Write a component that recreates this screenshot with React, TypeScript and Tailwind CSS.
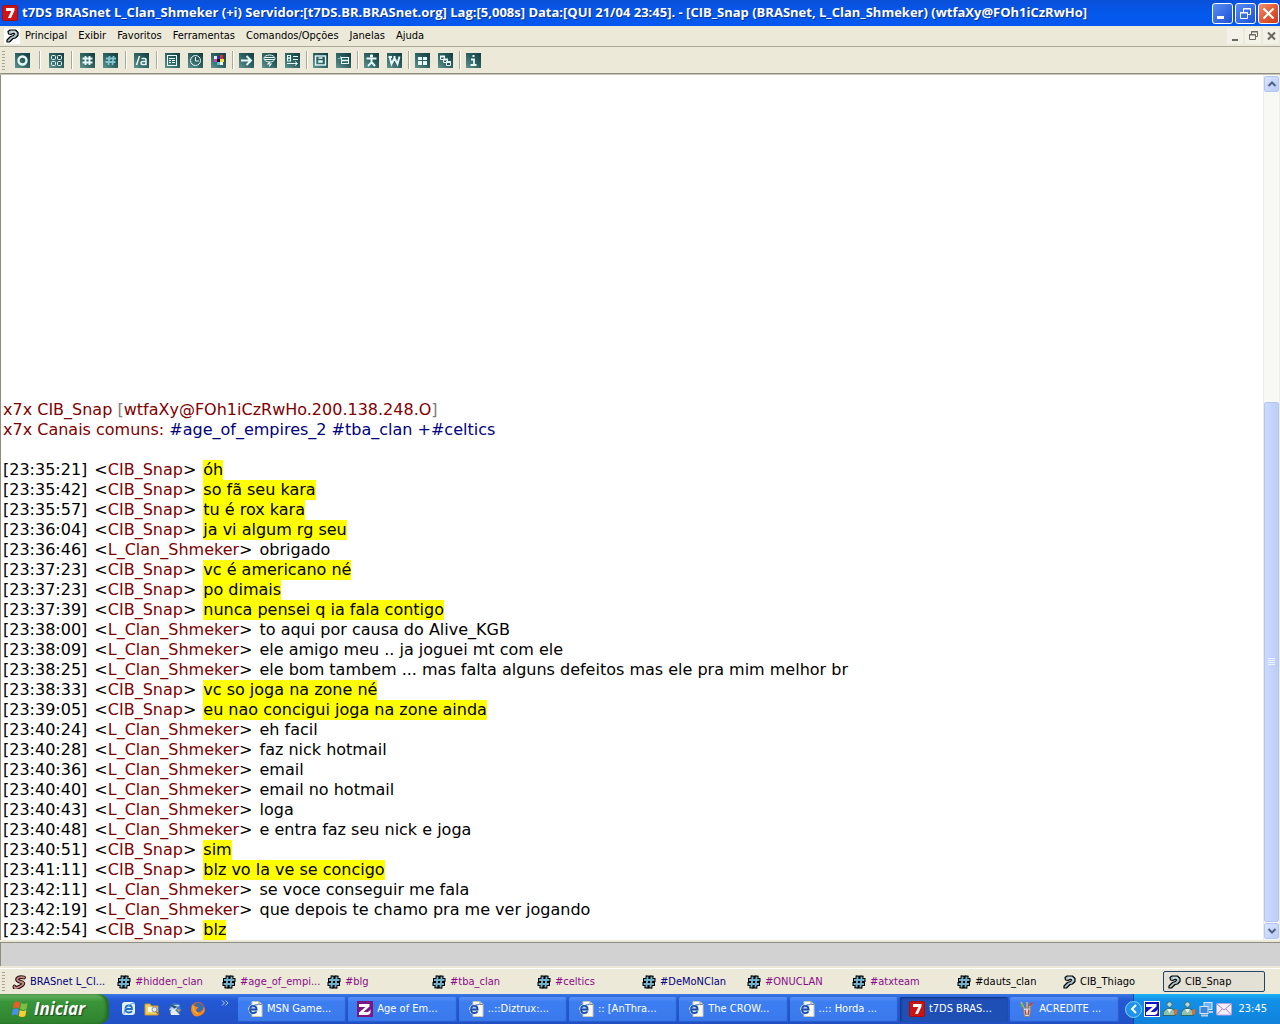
import React from "react";

const UI = "font-['DejaVu_Sans_Condensed','DejaVu_Sans',sans-serif]";

/* ---------- toolbar ---------- */

const toolGroups: { gap: string; tools: { name: string; art: React.ReactNode }[] }[] = [
  {
    gap: "w-[19px]",
    tools: [{ name: "Conectar", art: <circle cx="7.5" cy="7.5" r="4" strokeWidth="2.4" /> }],
  },
  {
    gap: "w-4",
    tools: [
      {
        name: "Opções",
        art: (
          <>
            <rect x="2.5" y="2.5" width="4" height="4" rx="1" />
            <rect x="8.5" y="2.5" width="4" height="4" rx="1" />
            <rect x="2.5" y="8.5" width="4" height="4" rx="1" />
            <rect x="8.5" y="8.5" width="4" height="4" rx="1" />
          </>
        ),
      },
    ],
  },
  {
    gap: "w-4",
    tools: [
      { name: "Canais", art: <path d="M5.5 3v9M9.5 3v9M2.5 5.5h10M2.5 9.5h10" strokeWidth="1.8" /> },
      {
        name: "Listar canais",
        art: <path d="M6.5 3l-1 9M10.5 3l-1 9M3 5.5h10M2.5 9h10" strokeWidth="1.8" stroke="#7fc4cf" />,
      },
    ],
  },
  {
    gap: "w-4",
    tools: [
      { name: "Apelidos", art: <path d="M5.500 3L2.500 12M7.500 5.500h3.500q1 0 1 1v5h-3.500q-1.500 0-1.500-1.500t1.500-1.500H12" strokeWidth="1.500" /> },
    ],
  },
  {
    gap: "w-[13px]",
    tools: [
      {
        name: "Agenda",
        art: (
          <>
            <rect x="2.5" y="2.5" width="9" height="10" />
            <path d="M4 5.500h6M4 7.500h2M7 7.500h3M4 9.500h2M7 9.500h3" />
          </>
        ),
      },
      {
        name: "Relógio",
        art: (
          <>
            <circle cx="7.5" cy="7.5" r="5" />
            <path d="M7.500 4v4h3.500" />
          </>
        ),
      },
      {
        name: "Cores",
        art: (
          <g stroke="none">
            <path fill="#e8f4f4" d="M3 3h3v3H3z" />
            <path fill="#2434c8" d="M6 3h3v3H6z" />
            <path fill="#d83030" d="M9 2h3v4H9z" />
            <path fill="#d040c0" d="M3 6h3v3H3z" />
            <path fill="#101010" d="M6 6h3v3H6z" />
            <path fill="#f0e040" d="M9 6h4v3H9z" />
            <path fill="#50c8e0" d="M6 9h3v3H6z" />
            <path fill="#f8f8f0" d="M9 9h3v3H9z" />
          </g>
        ),
      },
    ],
  },
  {
    gap: "w-[13px]",
    tools: [
      { name: "Enviar", art: <path d="M2 7.500h10M7.500 3l4.500 4.500L7.500 12" strokeWidth="2" /> },
      {
        name: "Conversa",
        art: (
          <>
            <ellipse cx="7.5" cy="5.5" rx="5.5" ry="3.5" />
            <path d="M3 4.500h9M2.500 6.500h10M8 9l-2 2h3l-2 2.500" strokeWidth="1.200" />
          </>
        ),
      },
      {
        name: "DCC",
        art: (
          <>
            <rect x="2.5" y="2.5" width="3" height="2.5" />
            <rect x="2.5" y="5" width="3" height="3" />
            <path d="M8 3.500h5M8 6.500h5M2 10.500h10M10 8.500l2.500 2-2.500 2" />
          </>
        ),
      },
    ],
  },
  {
    gap: "w-[13px]",
    tools: [
      {
        name: "Arquivos",
        art: (
          <>
            <rect x="2.5" y="3" width="10" height="9" strokeWidth="1.4" />
            <path d="M5.500 5h4M6 8h3v1H6z" strokeWidth="1.400" />
          </>
        ),
      },
      {
        name: "Janelas",
        art: (
          <>
            <path d="M4.500 3v2.500M2 5.500h3" stroke="#7fb5b5" />
            <rect x="5.5" y="4.5" width="7" height="6" />
            <path d="M6 7.500h6" strokeWidth="1.500" />
          </>
        ),
      },
    ],
  },
  {
    gap: "w-[13px]",
    tools: [
      {
        name: "Contatos",
        art: (
          <>
            <circle cx="7.5" cy="3" r="1.7" fill="#fff" stroke="none" />
            <path d="M2.500 5.500h10M7.500 5.500v4L4 13M7.500 9l3.500 4" strokeWidth="1.900" />
          </>
        ),
      },
      { name: "Whois", art: <path d="M2.500 3.500l2 7.500 3-6 3 6 2-7.500M1.500 4H5M6.500 4h2" strokeWidth="1.900" /> },
    ],
  },
  {
    gap: "w-[13px]",
    tools: [
      {
        name: "Lado a lado",
        art: (
          <g fill="#e8fafa" stroke="none">
            <path d="M3 4h4v3H3zM8 4h4v3H8zM3 8h4v4H3zM8 8h4v4H8z" />
          </g>
        ),
      },
      {
        name: "Cascata",
        art: (
          <g fill="#285a5a">
            <path d="M2.500 3.500h4v3h-4zM5.500 6.500h4v3h-4zM8.500 8.500h4v4h-4z" />
            <path d="M2 3.500h5M5 6.500h5M8 9h5" strokeWidth="2" />
          </g>
        ),
      },
    ],
  },
  {
    gap: "",
    tools: [{ name: "Sobre", art: <path d="M6.500 3h2M5 6.500h3V12M4.500 12h6" strokeWidth="1.800" /> }],
  },
];

function Grip() {
  return (
    <span className="flex w-1 flex-col gap-[2px]" aria-hidden="true">
      {Array.from({ length: 7 }, (_, i) => (
        <i key={i} className="block h-px w-[3px] bg-[#a8a592]" />
      ))}
    </span>
  );
}

function Toolbar() {
  return (
    <div role="toolbar" className="flex h-[27px] shrink-0 items-center border-b border-[#8f8c80] bg-[#ece9d8] pl-[2px]">
      <Grip />
      <div className="ml-[9px] flex items-center">
        {toolGroups.map((g, i) => (
          <React.Fragment key={i}>
            <div className="flex gap-2">
              {g.tools.map((t) => (
                <button
                  key={t.name}
                  aria-label={t.name}
                  title={t.name}
                  className="size-[15px] bg-linear-to-bl from-[#123c40] via-[#2e6263] to-[#609590]"
                >
                  <svg viewBox="0 0 15 15" className="block size-[15px]" fill="none" stroke="#e6f8f8">
                    {t.art}
                  </svg>
                </button>
              ))}
            </div>
            {g.gap && (
              <span className={"flex justify-center " + g.gap}>
                <i className="h-[18px] w-[2px] border-l border-[#aca899] bg-white" />
              </span>
            )}
          </React.Fragment>
        ))}
      </div>
    </div>
  );
}

/* ---------- small pictures ---------- */

function Seven() {
  return (
    <svg viewBox="0 0 16 16" className="size-4 shrink-0" aria-hidden="true">
      <rect x="0.5" y="0.5" width="15" height="15" rx="1.5" fill="#cc1414" stroke="#a80c0c" />
      <path d="M4 3h8.500v2.500L9 13H6l3.300-7H4z" fill="#fff" />
    </svg>
  );
}

function QueryIcon() {
  return (
    <svg viewBox="0 0 14 14" className="size-[14px] shrink-0" fill="none" strokeLinejoin="round" aria-hidden="true">
      <path d="M3 2.500L5 1h5.500L13 3.500v3L10.500 9 8 9.500 4.500 13H2v-2l3.500-3.500L8.500 6.500 9.500 5 8.500 4 6 5.500 3.500 5z" fill="#a9c3cc" stroke="#000" strokeWidth="1.200" />
      <path d="M6 3h4l1 1.500" stroke="#e4eff2" />
    </svg>
  );
}

function HashIcon() {
  return (
    <svg viewBox="0 0 14 14" className="size-[14px] shrink-0" fill="none" strokeLinecap="square" aria-hidden="true">
      <path d="M5.500 2.500l-1 9M9.500 2.500l-1 9M3 5h8.500M2.500 9H11" stroke="#000" strokeWidth="4" />
      <path d="M5.500 2.500l-1 9M9.500 2.500l-1 9M3 5h8.500M2.500 9H11" stroke="#6fb3cf" strokeWidth="1.900" />
    </svg>
  );
}

function StatusIcon() {
  return (
    <svg viewBox="0 0 14 14" className="size-[14px] shrink-0" fill="none" strokeLinecap="round" aria-hidden="true">
      <path d="M12 2.500Q7 1.500 5.500 3.500T9 7t-1 4.500-5.500 0" stroke="#1a0808" strokeWidth="3.800" />
      <path d="M12 2.500Q7 1.500 5.500 3.500T9 7t-1 4.500-5.500 0" stroke="#c98a88" strokeWidth="1.900" />
    </svg>
  );
}

function IePage() {
  return (
    <svg viewBox="0 0 16 16" className="size-4 shrink-0" fill="none" aria-hidden="true">
      <path d="M5 .5h7l3 3v12H5z" fill="#fbfbf2" stroke="#c9c7b5" />
      <path d="M12 .5v3h3" stroke="#888" />
      <circle cx="6" cy="8.5" r="5" fill="#cfe2f8" />
      <path d="M3 8.500h6.500Q9.500 5 6.200 5T3 8.500t3.400 3.600Q8.500 12 9.500 10.500" stroke="#1b4aa8" strokeWidth="1.800" />
      <path d="M1 12.500Q0 10 4 6.500t7.500-3" stroke="#3b74cc" />
    </svg>
  );
}

function ZoneIcon() {
  return (
    <svg viewBox="0 0 16 16" className="size-4 shrink-0" aria-hidden="true">
      <rect width="16" height="16" fill="#7c1680" />
      <path d="M2 3h10.500v2.500L6.500 11h4q2.500-.5 3-3v4q-1 2-3 2H2v-2.500L8.500 6H2z" fill="#fff" />
    </svg>
  );
}

function PaintIcon() {
  return (
    <svg viewBox="0 0 16 16" className="size-4 shrink-0" fill="none" aria-hidden="true">
      <path d="M5 7L2 1M8 7V1M10 7l3.500-5" stroke="#e8b04c" strokeWidth="1.600" />
      <path d="M2 3l1.500 3" stroke="#58b24e" strokeWidth="2" />
      <path d="M11 5l2.500-3.500" stroke="#d83c22" strokeWidth="2" />
      <path d="M4 7h8l-1.500 8.500h-5z" fill="#d8dde8" stroke="#8b7c74" />
      <path d="M6 9l1 5M10 8.500L9 14" stroke="#b84a30" strokeWidth="1.400" />
    </svg>
  );
}

function WindowsFlag() {
  return (
    <svg viewBox="0 0 18 18" className="size-[18px] shrink-0" aria-hidden="true">
      <path d="M3 2.500q3-2 6 0L8 8.500q-3-2-6 0z" fill="#ef5a2c" />
      <path d="M10 3q3 2 6.500 0l-1 6q-3 2-6.500 0z" fill="#7cc043" />
      <path d="M1.800 9.500q3-2 6 0l-1 6q-3-2-6 0z" fill="#4a8ff0" />
      <path d="M8.800 10q3 2 6.500 0l-1 6q-3 2-6.500 0z" fill="#fbcf33" />
    </svg>
  );
}

/* ---------- title and menu ---------- */

function TitleBar() {
  const btn = "flex size-[21px] items-center justify-center rounded-[3px] border border-white";
  return (
    <header className="flex h-[26px] shrink-0 items-center bg-linear-to-b from-[#0a4fd8] via-[#0458ec] to-[#0458ee] pr-px pl-[2px] text-white">
      <Seven />
      <h1 className="ml-1 min-w-0 flex-1 truncate font-['Open_Sans',sans-serif] text-[13px] font-bold whitespace-nowrap [text-shadow:1px_1px_#0a2f8c]">
        t7DS BRASnet L_Clan_Shmeker (+i) Servidor:[t7DS.BR.BRASnet.org] Lag:[5,008s] Data:[QUI 21/04 23:45]. - [CIB_Snap
        (BRASnet, L_Clan_Shmeker) (wtfaXy@FOh1iCzRwHo]
      </h1>
      <div className="flex gap-[2px]">
        <button aria-label="Minimizar" className={btn + " bg-linear-to-br from-[#5b8df5] to-[#1b4fd6]"}>
          <svg viewBox="0 0 19 19" className="size-[19px]"><path d="M4 12h7v3H4z" fill="#fff" /></svg>
        </button>
        <button aria-label="Restaurar" className={btn + " bg-linear-to-br from-[#5b8df5] to-[#1b4fd6]"}>
          <svg viewBox="0 0 19 19" className="size-[19px]" fill="none" stroke="#fff">
            <path d="M7.500 8V4.500h7v6H12M7 5h8M4.500 8.500h7v6h-7zM4 9h8" />
          </svg>
        </button>
        <button aria-label="Fechar" className={btn + " bg-linear-to-br from-[#ee8f6c] via-[#e25a34] to-[#cc3d16]"}>
          <svg viewBox="0 0 19 19" className="size-[19px]" stroke="#fff" strokeWidth="2.2"><path d="M4.500 4.500l10 10M14.500 4.500l-10 10" /></svg>
        </button>
      </div>
    </header>
  );
}

const menus = ["Principal", "Exibir", "Favoritos", "Ferramentas", "Comandos/Opções", "Janelas", "Ajuda"];

function MenuBar() {
  const btn = "flex size-4 items-center justify-center bg-[#f3f1e8]";
  return (
    <nav className="flex h-[21px] shrink-0 items-center border-b border-[#aca899] bg-[#ece9d8] pr-px pl-1">
      <span className="flex size-4 items-center justify-center bg-white"><QueryIcon /></span>
      <div className="ml-[5px] flex flex-1 gap-[11px] text-[11px] leading-4 text-black">
        {menus.map((m) => (
          <button key={m}>{m}</button>
        ))}
      </div>
      <div className="flex gap-[2px]">
        <button aria-label="Minimizar janela" className={btn}>
          <svg viewBox="0 0 16 16" className="size-4"><path d="M5 11h6v2H5z" fill="#6b695f" /></svg>
        </button>
        <button aria-label="Restaurar janela" className={btn}>
          <svg viewBox="0 0 16 16" className="size-4" fill="none" stroke="#6b695f"><path d="M6.500 6V3.500h6v5H11M6 4h7M4.500 6.500h6v5h-6zM4 7h7" /></svg>
        </button>
        <button aria-label="Fechar janela" className={btn}>
          <svg viewBox="0 0 16 16" className="size-4" stroke="#6b695f" strokeWidth="2"><path d="M5 4.500l7 7M12 4.500l-7 7" /></svg>
        </button>
      </div>
    </nav>
  );
}

/* ---------- conversation ---------- */

const C = "CIB_Snap";
const L = "L_Clan_Shmeker";
const messages: [string, string, string][] = [
  ["23:35:21", C, "óh"],
  ["23:35:42", C, "so fã seu kara"],
  ["23:35:57", C, "tu é rox kara"],
  ["23:36:04", C, "ja vi algum rg seu"],
  ["23:36:46", L, "obrigado"],
  ["23:37:23", C, "vc é americano né"],
  ["23:37:23", C, "po dimais"],
  ["23:37:39", C, "nunca pensei q ia fala contigo"],
  ["23:38:00", L, "to aqui por causa do Alive_KGB"],
  ["23:38:09", L, "ele amigo meu .. ja joguei mt com ele"],
  ["23:38:25", L, "ele bom tambem ... mas falta alguns defeitos mas ele pra mim melhor br"],
  ["23:38:33", C, "vc so joga na zone né"],
  ["23:39:05", C, "eu nao concigui joga na zone ainda"],
  ["23:40:24", L, "eh facil"],
  ["23:40:28", L, "faz nick hotmail"],
  ["23:40:36", L, "email"],
  ["23:40:40", L, "email no hotmail"],
  ["23:40:43", L, "loga"],
  ["23:40:48", L, "e entra faz seu nick e joga"],
  ["23:40:51", C, "sim"],
  ["23:41:11", C, "blz vo la ve se concigo"],
  ["23:42:11", L, "se voce conseguir me fala"],
  ["23:42:19", L, "que depois te chamo pra me ver jogando"],
  ["23:42:54", C, "blz"],
];

function Chat() {
  return (
    <main className="flex min-h-0 flex-1 flex-col justify-end overflow-hidden border-l border-[#8f8c80] pl-[2px] font-['DejaVu_Sans',sans-serif] text-[16px] leading-5 text-black">
      <p className="text-[#7f0000]">
        x7x CIB_Snap <span className="text-[#7f7f7f]">[</span>wtfaXy@FOh1iCzRwHo.200.138.248.O
        <span className="text-[#7f7f7f]">]</span>
      </p>
      <p className="text-[#7f0000]">
        x7x Canais comuns: <span className="text-[#00007f]">#age_of_empires_2 #tba_clan +#celtics</span>
      </p>
      <ol className="mt-5">
        {messages.map(([time, nick, text]) => (
          <li key={time + text} className="flex gap-[7px] whitespace-nowrap">
            <time>[{time}]</time>
            <span>
              &lt;<span className="text-[#7f0000]">{nick}</span>&gt;
            </span>
            <span className={nick === C ? "bg-[#ffff00]" : ""}>{text}</span>
          </li>
        ))}
      </ol>
    </main>
  );
}

function ScrollBar() {
  const btn =
    "flex h-4 w-full shrink-0 items-center justify-center rounded-[2px] border border-[#b4c6f2] bg-linear-to-br from-[#dbe5ff] to-[#b9cbf8]";
  return (
    <div className="flex w-[17px] shrink-0 flex-col border-x border-[#eeede5] bg-[#f8f8f5] py-px">
      <button aria-label="Rolar para cima" className={btn}>
        <svg viewBox="0 0 10 8" className="h-2 w-[10px]" fill="none" stroke="#4d6185" strokeWidth="2"><path d="M1.500 6L5 2.500 8.500 6" /></svg>
      </button>
      <div className="flex min-h-0 flex-1 flex-col py-px">
        <span className="flex-[310]" />
        <span className="flex flex-[520] flex-col items-center justify-center gap-px rounded-[2px] border border-[#b4c6f2] bg-linear-to-r from-[#cbdafe] to-[#bccdf9]">
          {[0, 1, 2, 3].map((i) => (
            <i key={i} className="h-px w-[7px] bg-[#eef4fe]" />
          ))}
        </span>
      </div>
      <button aria-label="Rolar para baixo" className={btn}>
        <svg viewBox="0 0 10 8" className="h-2 w-[10px]" fill="none" stroke="#4d6185" strokeWidth="2"><path d="M1.500 2L5 5.500 8.500 2" /></svg>
      </button>
    </div>
  );
}

/* ---------- switch bar ---------- */

const tabs: [string, string, "status" | "hash" | "query"][] = [
  ["BRASnet L_Cl...", "text-[#00007f]", "status"],
  ["#hidden_clan", "text-[#8a0a8a]", "hash"],
  ["#age_of_empi...", "text-[#8a0a8a]", "hash"],
  ["#blg", "text-[#8a0a8a]", "hash"],
  ["#tba_clan", "text-[#8a0a8a]", "hash"],
  ["#celtics", "text-[#8a0a8a]", "hash"],
  ["#DeMoNClan", "text-[#00007f]", "hash"],
  ["#ONUCLAN", "text-[#8a0a8a]", "hash"],
  ["#atxteam", "text-[#8a0a8a]", "hash"],
  ["#dauts_clan", "text-black", "hash"],
  ["CIB_Thiago", "text-black", "query"],
  ["CIB_Snap", "text-black", "query"],
];

function SwitchBar() {
  return (
    <div className="flex h-[26px] shrink-0 items-center border-t border-white bg-[#ece9d8] pr-3 pl-[2px]">
      <Grip />
      <div className="ml-[2px] flex min-w-0 flex-1">
        {tabs.map(([label, color, icon]) => {
          const active = label === "CIB_Snap";
          return (
            <button
              key={label}
              className={
                "mr-[3px] flex h-[21px] min-w-0 flex-1 items-center gap-1 rounded-[2px] border pl-[3px] text-[11px] leading-4 whitespace-nowrap " +
                color +
                (active ? " border-[#22466b] bg-[#e3e0d6]" : " border-transparent")
              }
            >
              {icon === "hash" ? <HashIcon /> : icon === "query" ? <QueryIcon /> : <StatusIcon />}
              <span>{label}</span>
            </button>
          );
        })}
      </div>
    </div>
  );
}

/* ---------- taskbar ---------- */

const tasks: [string, React.ReactNode][] = [
  ["MSN Game...", <IePage />],
  ["Age of Em...", <ZoneIcon />],
  ["..::Diztrux:...", <IePage />],
  [":: [AnThra...", <IePage />],
  ["The CROW...", <IePage />],
  ["..:: Horda ...", <IePage />],
  ["t7DS BRAS...", <Seven />],
  ["ACREDITE ...", <PaintIcon />],
];

const quick: [string, React.ReactNode][] = [
  [
    "Internet Explorer",
    <>
      <rect x="1" y="1" width="13" height="13" rx="3" fill="#e4f1fb" />
      <path d="M4.500 8h6.500q0-3.500-3.200-3.500T4.500 8t3.300 3.500Q10 11.500 11 10" fill="none" stroke="#1f6fc4" strokeWidth="1.800" />
      <path d="M3 13Q2 9 7 5t7-2" fill="none" stroke="#58a4dc" />
    </>,
  ],
  [
    "Explorador",
    <>
      <path d="M1 3h5l1.500 2H14v9H1z" fill="#f2cf63" stroke="#c7952c" />
      <path d="M4 6h8v5H4z" fill="#fdf8df" />
      <circle cx="10.5" cy="8.5" r="2.5" fill="#d9ecf7" stroke="#7a93a5" />
      <path d="M12 10.500l3 3" stroke="#a0712f" strokeWidth="1.500" />
    </>,
  ],
  [
    "Thunderbird",
    <>
      <circle cx="8" cy="8" r="6" fill="#3f78b8" />
      <path d="M2 9q4-6 11-5-3 2-4 5z" fill="#b8d4ee" />
      <path d="M4 14q-2-5 3-6l6 6z" fill="#e8edf2" />
      <path d="M2 3l9 3-4 1.500z" fill="#26507c" />
      <path d="M10 8l4 1-3 2z" fill="#c8a05c" />
    </>,
  ],
  [
    "Firefox",
    <>
      <circle cx="8" cy="8" r="7" fill="#e0641c" />
      <path d="M4.500 3.500Q8 0 12.500 3.500t-1 6.500-5.500-1z" fill="#3a6cb0" />
      <path d="M2 3q1.500 2.500 4 2.500L9 7q-3 .5-3 2.500 1.500 3 5 1.500 3-2 2.500-6Q17 11 10 14.500T1.200 9z" fill="#f08a20" />
      <path d="M3 5q0 6 5 8" fill="none" stroke="#fbc63c" />
    </>,
  ],
];

function Buddy() {
  return (
    <svg viewBox="0 0 16 16" className="size-4 shrink-0" aria-hidden="true">
      <circle cx="7.5" cy="3.5" r="2.7" fill="#b4d7dd" stroke="#376d68" />
      <path d="M1 14.500q0-7 6.500-7t6 7z" fill="#90c2b0" stroke="#2d6860" />
      <path d="M5 8l2.500 4L10 8" fill="#e8f4f2" />
      <path d="M12 9l3.500-1-.5 5-3 1z" fill="#e76b28" />
    </svg>
  );
}

function Taskbar() {
  return (
    <footer className="flex h-[30px] shrink-0 bg-linear-to-b from-[#3a78e4] via-[#2459d6] via-20% to-[#2050c4] text-white">
      <button className="flex h-full w-[109px] shrink-0 items-center gap-[5px] rounded-r-[10px] bg-linear-to-b from-[#6cb56a] via-[#3a963a] via-25% to-[#2f812f] pl-[11px] font-['Open_Sans',sans-serif] text-[17px] font-bold italic [box-shadow:inset_-3px_0_3px_#236b24] [text-shadow:1px_1px_1px_#1a4a1a]">
        <WindowsFlag />
        <span>Iniciar</span>
      </button>
      <div className="ml-3 flex w-[117px] shrink-0 items-center gap-[7px]">
        {quick.map(([name, art]) => (
          <button key={name} aria-label={name} title={name}>
            <svg viewBox="0 0 16 16" className="block size-4">{art}</svg>
          </button>
        ))}
        <button aria-label="Mais" className="mb-3 ml-2">
          <svg viewBox="0 0 8 6" className="block h-[6px] w-2" fill="none" stroke="#b5d0ff"><path d="M1 .5L3.500 3 1 5.500M4.500.5L7 3 4.500 5.500" /></svg>
        </button>
      </div>
      <div className="flex min-w-0 flex-1 items-center">
        {tasks.map(([label, icon]) => (
          <button
            key={label}
            className={
              "mr-[2px] flex h-[25px] min-w-0 flex-1 items-center gap-1 overflow-hidden rounded-[2px] pl-[9px] text-[11px] leading-4 whitespace-nowrap " +
              (label.startsWith("t7DS")
                ? "bg-[#1e4fb5] [box-shadow:inset_1px_1px_2px_#123380]"
                : "bg-linear-to-b from-[#5590f8] via-[#3c7ef2] via-20% to-[#3a79ec] [box-shadow:inset_-1px_-1px_1px_#2a5cc8]")
            }
          >
            {icon}
            <span>{label}</span>
          </button>
        ))}
      </div>
      <div className="ml-[13px] flex shrink-0 items-center gap-[2px] border-l border-[#0c4a9c] bg-linear-to-b from-[#1cb2f4] via-[#1290e8] via-20% to-[#1082dc] pr-[13px]">
        <button aria-label="Mostrar ícones ocultos" className="-ml-[9px] flex size-[17px] items-center justify-center rounded-full border border-[#7fd0fa] bg-[#1f93ec]">
          <svg viewBox="0 0 8 10" className="h-[10px] w-2" fill="none" stroke="#fff" strokeWidth="2"><path d="M6 1L2 5l4 4" /></svg>
        </button>
        <svg viewBox="0 0 16 16" className="size-4 shrink-0" aria-hidden="true">
          <rect x=".5" y=".5" width="15" height="15" fill="#1212c4" stroke="#fff" />
          <path d="M2 3h10.500v2.500L6.500 11h4q2.500-.5 3-3v4q-1 2-3 2H2v-2.500L8.500 6H2z" fill="#fff" />
        </svg>
        <Buddy />
        <Buddy />
        <svg viewBox="0 0 16 16" className="size-4 shrink-0" aria-hidden="true">
          <rect x="6" y="1.5" width="8" height="7" fill="#6cb4f0" stroke="#d5e6f6" />
          <rect x="2" y="5.5" width="8" height="7" fill="#3f86dc" stroke="#d5e6f6" />
          <path d="M3 14.500h7M11 11h4" stroke="#c4cdd8" strokeWidth="2" />
        </svg>
        <svg viewBox="0 0 16 16" className="size-4 shrink-0" aria-hidden="true">
          <rect x=".5" y="2.5" width="15" height="11.5" rx="1" fill="#f8effc" stroke="#b9a5dc" />
          <path d="M1 3l7 6 7-6M1 13.500L6 8M15 13.500L10 8" fill="none" stroke="#a188cc" />
        </svg>
        <time className="ml-1 text-[11px]">23:45</time>
      </div>
    </footer>
  );
}

export default function App() {
  return (
    <div className={"flex h-screen flex-col overflow-hidden bg-[#ece9d8] " + UI}>
      <TitleBar />
      <MenuBar />
      <Toolbar />
      <div className="flex min-h-0 flex-1 border-t border-[#c9c6b8] bg-white">
        <Chat />
        <ScrollBar />
      </div>
      <div className="my-[2px] h-6 shrink-0 border-t border-l border-[#8f8c80] bg-[#d2d2d2]" />
      <SwitchBar />
      <Taskbar />
    </div>
  );
}
